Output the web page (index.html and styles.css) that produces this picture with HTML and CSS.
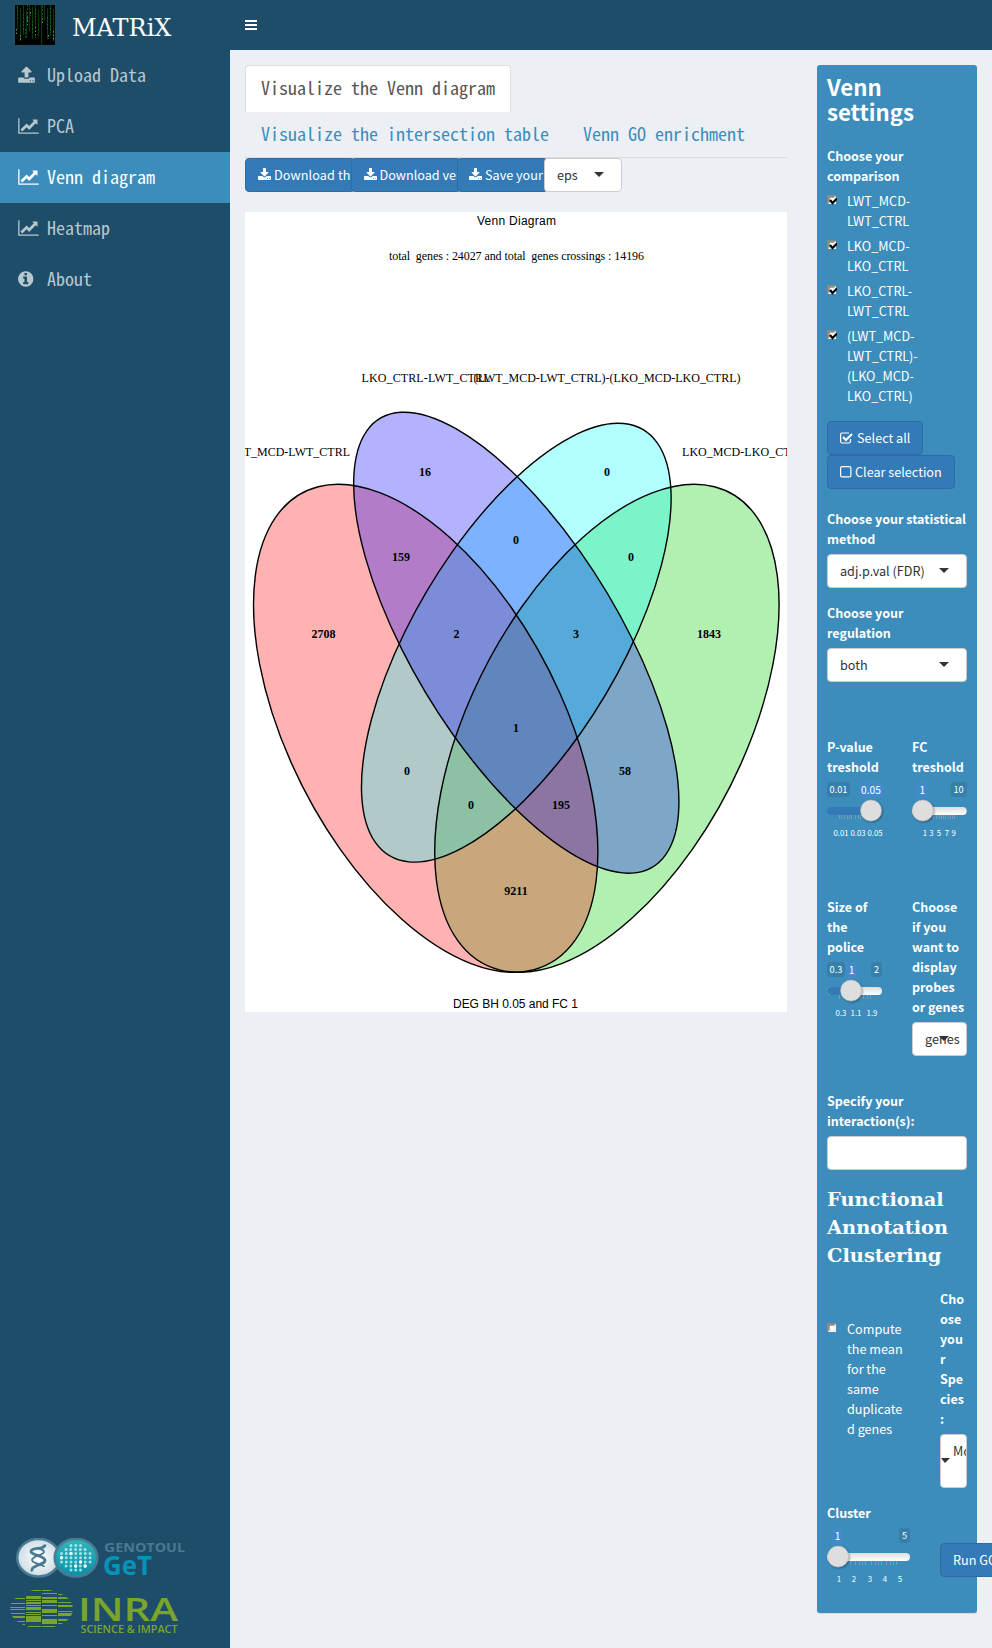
FILE: index.html
```
<!DOCTYPE html>
<html lang="en">
<head>
<meta charset="utf-8">
<title>MATRiX</title>
<link rel="stylesheet" href="styles.css">
</head>
<body>
<svg width="0" height="0" class="defs">
  <defs>
    <symbol id="chart" viewBox="0 0 2048 1792"><path d="M2048 1536v128h-2048v-1536h128v1408h1920zM1920 288v435q0 21-19.500 29.500t-35.500-7.500l-121-121-633 633q-10 10-23 10t-23-10l-233-233-416 416-192-192 585-585q10-10 23-10t23 10l233 233 464-464-121-121q-16-16-7.500-35.500t29.500-19.500h435q14 0 23 9t9 23z"/></symbol>
    <symbol id="upload" viewBox="64 0 1664 1792"><path d="M1344 1472q0-26-19-45t-45-19-45 19-19 45 19 45 45 19 45-19 19-45zm256 0q0-26-19-45t-45-19-45 19-19 45 19 45 45 19 45-19 19-45zm128-224v320q0 40-28 68t-68 28h-1472q-40 0-68-28t-28-68v-320q0-40 28-68t68-28h427q21 56 70.500 92t110.500 36h256q61 0 110.500-36t70.500-92h427q40 0 68 28t28 68zm-325-648q-17 40-59 40h-256v448q0 26-19 45t-45 19h-256q-26 0-45-19t-19-45v-448h-256q-42 0-59-40-17-39 14-69l448-448q18-19 45-19t45 19l448 448q31 30 14 69z"/></symbol>
    <symbol id="download" viewBox="64 0 1664 1792"><path d="M1344 1344q0-26-19-45t-45-19-45 19-19 45 19 45 45 19 45-19 19-45zm256 0q0-26-19-45t-45-19-45 19-19 45 19 45 45 19 45-19 19-45zm128-224v320q0 40-28 68t-68 28h-1472q-40 0-68-28t-28-68v-320q0-40 28-68t68-28h465l135 136q58 56 136 56t136-56l136-136h464q40 0 68 28t28 68zm-325-569q17 41-14 70l-448 448q-18 19-45 19t-45-19l-448-448q-31-29-14-70 17-39 59-39h256v-448q0-26 19-45t45-19h256q26 0 45 19t19 45v448h256q42 0 59 39z"/></symbol>
    <symbol id="info" viewBox="128 0 1536 1792"><path d="M1152 1376v-160q0-14-9-23t-23-9h-96v-512q0-14-9-23t-23-9h-320q-14 0-23 9t-9 23v160q0 14 9 23t23 9h96v320h-96q-14 0-23 9t-9 23v160q0 14 9 23t23 9h448q14 0 23-9t9-23zm-128-896v-160q0-14-9-23t-23-9h-192q-14 0-23 9t-9 23v160q0 14 9 23t23 9h192q14 0 23-9t9-23zm640 416q0 209-103 385.500t-279.500 279.500-385.500 103-385.500-103-279.500-279.500-103-385.500 103-385.500 279.500-279.500 385.500-103 385.500 103 279.500 279.500 103 385.500z"/></symbol>
    <linearGradient id="rail" x1="0" y1="0" x2="0" y2="1"><stop offset="0" stop-color="#ddd"/><stop offset="1" stop-color="#fff"/></linearGradient>
    <filter id="soft" x="-30%" y="-30%" width="160%" height="170%"><feDropShadow dx="1" dy="1" stdDeviation="1" flood-opacity=".4"/></filter>
  </defs>
</svg>

<header class="topbar">
  <div class="brand">
    <svg class="rain" width="40" height="40" viewBox="0 0 40 40">
      <rect width="40" height="40" fill="#010301"/>
      <g fill="none" stroke="#0a3a10" stroke-width="1.200">
        <path d="M2.500 0V24M5.500 3V36M8.500 0V30M11.500 6V33M14.500 0V26M17.500 2V34M20.500 0V22M23.500 5V31M26.500 0V40M29.500 0V16M32.500 3V34M35.500 0V31M38.500 4V36"/>
      </g>
      <g fill="none" stroke="#1f6a29" stroke-width="1" stroke-dasharray="1.500 2">
        <path d="M2.500 2V14M8.500 9V27M12.500 0V17M17.500 16V30M20.500 4V15M27.500 1V12M32.500 12V24M35.500 3V28M10.500 24V34"/>
      </g>
      <g fill="none" stroke="#66906b" stroke-width="1" stroke-dasharray="1.500 2">
        <path d="M5.500 30V36M12.500 12V20M20.500 22V33M27.500 13V19M33.500 30V34M38.500 26V36M1.500 24V30M15.500 7V11"/>
      </g>
    </svg>
    <span class="brand-name">MATRiX</span>
  </div>
  <svg class="bars" width="12" height="10"><path d="M0 0h12v2H0zM0 4h12v2H0zM0 8h12v2H0z" fill="#fff"/></svg>
</header>

<div class="shell">
  <aside class="sidebar">
    <nav>
      <a class="item"><span class="ico"><svg width="17" height="18"><use href="#upload"/></svg></span>Upload Data</a>
      <a class="item"><span class="ico"><svg width="21" height="18"><use href="#chart"/></svg></span>PCA</a>
      <a class="item active"><span class="ico"><svg width="21" height="18"><use href="#chart"/></svg></span>Venn diagram</a>
      <a class="item"><span class="ico"><svg width="21" height="18"><use href="#chart"/></svg></span>Heatmap</a>
      <a class="item"><span class="ico"><svg width="15.500" height="18"><use href="#info"/></svg></span>About</a>
    </nav>
    <svg class="logos" width="200" height="110" viewBox="0 -2 200 110">
      <defs>
        <radialGradient id="pearl"><stop offset="0" stop-color="#fff"/><stop offset="1" stop-color="#cfdde6"/></radialGradient>
        <linearGradient id="teal" x1="0" y1="0" x2="0" y2="1"><stop offset="0" stop-color="#35b5bf"/><stop offset="1" stop-color="#0592a6"/></linearGradient>
        <clipPath id="globe"><ellipse cx="41.500" cy="69" rx="31.500" ry="19.500"/></clipPath>
      </defs>
      <ellipse cx="38.500" cy="17.700" rx="21.300" ry="18.800" fill="url(#pearl)" stroke="#4b7b92" stroke-width="2.500"/>
      <g fill="none" stroke="#4b7990">
        <path d="M45 4.500c0 6-14 2-14 7 0 4 14 4 14 9 0 3-4 3-8 5s-6 3-5 6" stroke-width="2.800"/>
        <path d="M37 8c4 2 7 1 7 4s-12 4-12 8 12 4 12 7" stroke-width="1.800"/>
      </g>
      <ellipse cx="76" cy="17.700" rx="21.300" ry="18.800" fill="url(#teal)" stroke="#4b7b92" stroke-width="2.500"/>
      <g fill="none" stroke="#c5f0f2" stroke-opacity=".8" stroke-width="3" stroke-linecap="round" stroke-dasharray="0.010 4.750">
        <path d="M71 5.500H81M66 9.500H86M61.500 13.500H91M61.500 17.700H91M61.500 22H91M66 26H86M71 30H81"/>
      </g>
      <path d="M71 13.500h0M61.500 17.700h0M80.500 22h0M75.700 26h0M85.200 26h0" stroke="#fff" stroke-width="3.400" stroke-linecap="round"/>
      <text x="104" y="11.500" class="geno" textLength="81" lengthAdjust="spacingAndGlyphs">G<tspan class="caps">ENOTOUL</tspan></text>
      <text x="103" y="35" class="get" textLength="49" lengthAdjust="spacingAndGlyphs">GeT</text>
      <g clip-path="url(#globe)" fill="#7aa52c">
        <path d="M10 58h15v1H10zM10 63h15v1H10zM10 67h15v1H10zM10 69h15v1H10zM10 73h15v1H10zM10 76h15v2H10zM10 81h15v1H10zM10 84h15v1H10z"/>
        <path d="M26 50h15v1H26zM26 56h15v3H26zM26 60h15v1H26zM26 62h15v2H26zM26 65h15v1H26zM26 67h15v3H26zM26 72h15v1H26zM26 74h15v1H26zM26 76h15v6H26zM26 86h15v1H26z"/>
        <path d="M42 50h15v1H42zM42 53h15v1H42zM42 57h15v2H42zM42 60h15v3H42zM42 65h15v1H42zM42 69h15v4H42zM42 75h15v1H42zM42 79h15v5H42zM42 86h15v1H42z"/>
        <path d="M58 54h15v1H58zM58 57h15v2H58zM58 62h15v1H58zM58 65h15v2H58zM58 71h15v1H58zM58 73h15v3H58zM58 79h15v2H58zM58 83h15v1H58z"/>
      </g>
      <text x="78" y="81" class="inra" textLength="100" lengthAdjust="spacingAndGlyphs">INRA</text>
      <text x="80.500" y="93" class="impact" textLength="97" lengthAdjust="spacingAndGlyphs">SCIENCE &amp; IMPACT</text>
    </svg>
  </aside>

  <main class="content">
    <ul class="tabs">
      <li class="tab current">Visualize the Venn diagram</li>
      <li class="tab">Visualize the intersection table</li>
      <li class="tab">Venn GO enrichment</li>
    </ul>
    <div class="toolbar">
      <button class="btn b1"><svg width="13" height="14"><use href="#download"/></svg>Download the plot</button>
      <button class="btn b2"><svg width="13" height="14"><use href="#download"/></svg>Download venn data</button>
      <button class="btn b3"><svg width="13" height="14"><use href="#download"/></svg>Save your plot</button>
      <div class="select format">eps<i class="caret"></i></div>
    </div>
    <svg class="plot" width="542" height="800" viewBox="0 0 542 800">
      <rect width="542" height="800" fill="#fff"/>
      <g transform="translate(271.300 430.700) scale(604 856)">
        <g fill-opacity=".3">
          <ellipse rx=".35" ry=".2" transform="translate(.15 .1) rotate(-45)" fill="#00cd00"/>
          <ellipse rx=".35" ry=".2" transform="translate(-.15 .1) rotate(45)" fill="#f00"/>
          <ellipse rx=".33" ry=".15" transform="rotate(-45)" fill="#0ff"/>
          <ellipse rx=".35" ry=".15" transform="rotate(45)" fill="#00f"/>
        </g>
        <g fill="none" class="outline">
          <ellipse rx=".35" ry=".2" transform="translate(.15 .1) rotate(-45)"/>
          <ellipse rx=".35" ry=".2" transform="translate(-.15 .1) rotate(45)"/>
          <ellipse rx=".33" ry=".15" transform="rotate(-45)"/>
          <ellipse rx=".35" ry=".15" transform="rotate(45)"/>
        </g>
      </g>
      <g class="caption">
        <text x="271.500" y="13" textLength="79">Venn Diagram</text>
        <text x="270.500" y="796" textLength="125" xml:space="preserve">DEG BH 0.05 and FC 1</text>
      </g>
      <g class="names">
        <text x="271.500" y="48" textLength="255" xml:space="preserve">total  genes : 24027 and total  genes crossings : 14196</text>
        <text x="181" y="170" textLength="129">LKO_CTRL-LWT_CTRL</text>
        <text x="362" y="170" textLength="267">(LWT_MCD-LWT_CTRL)-(LKO_MCD-LKO_CTRL)</text>
        <text x="43" y="244" textLength="124">LWT_MCD-LWT_CTRL</text>
        <text x="499" y="244" textLength="124">LKO_MCD-LKO_CTRL</text>
      </g>
      <g class="counts">
        <text x="180" y="264">16</text><text x="362" y="264">0</text>
        <text x="271" y="332">0</text><text x="156" y="349">159</text><text x="386" y="349">0</text>
        <text x="78.500" y="426">2708</text><text x="211.500" y="426">2</text><text x="331" y="426">3</text><text x="464" y="426">1843</text>
        <text x="271" y="520">1</text><text x="162" y="563">0</text><text x="380" y="563">58</text>
        <text x="226" y="597">0</text><text x="316" y="597">195</text><text x="271" y="683">9211</text>
      </g>
    </svg>
  </main>

  <section class="panel">
    <h2>Venn settings</h2>
    <label class="label">Choose your comparison</label>
    <div class="checks">
      <div class="check"><svg class="box" width="10" height="10"><use href="#ticked"/></svg><span>LWT_MCD-LWT_CTRL</span></div>
      <div class="check"><svg class="box" width="10" height="10"><use href="#ticked"/></svg><span>LKO_MCD-LKO_CTRL</span></div>
      <div class="check"><svg class="box" width="10" height="10"><use href="#ticked"/></svg><span>LKO_CTRL-LWT_CTRL</span></div>
      <div class="check"><svg class="box" width="10" height="10"><use href="#ticked"/></svg><span>(LWT_MCD-LWT_CTRL)-(LKO_MCD-LKO_CTRL)</span></div>
    </div>
    <div class="actions">
      <button class="btn"><svg class="sq" width="14" height="12" viewBox="0 0 14 12"><path d="M10.500 7v2.500a1.500 1.500 0 0 1-1.500 1.500H2A1.500 1.500 0 0 1 .6 9.500V2.500A1.500 1.500 0 0 1 2 1h7" fill="none" stroke="#fff" stroke-width="1.200"/><path d="M3 5l3 3 6-6" fill="none" stroke="#fff" stroke-width="2.200"/></svg>Select all</button>
      <button class="btn"><svg class="sq" width="12" height="12" viewBox="0 0 12 12"><rect x=".6" y=".6" width="10.300" height="10.300" rx="1.500" fill="none" stroke="#fff" stroke-width="1.200"/></svg>Clear selection</button>
    </div>
    <label class="label">Choose your statistical method</label>
    <div class="select">adj.p.val (FDR)<i class="caret"></i></div>
    <label class="label second">Choose your regulation</label>
    <div class="select">both<i class="caret"></i></div>

    <div class="pair thresholds">
      <div>
        <label class="label">P-value treshold</label>
        <svg class="slider" width="60" height="60">
          <rect class="end" y="4" width="23" height="15" rx="3"/><text x="11.500" y="15">0.01</text>
          <rect class="val" x="32" y="4" width="24" height="16" rx="3"/><text class="now" x="44" y="16">0.05</text>
          <rect x="0" y="29" width="55" height="8" rx="4" fill="#337ab7"/>
          <path class="ticks" d="M12.500 37v4M14.500 37v4M17.500 37v4M20.500 37v4M22.500 37v4M24.500 37v4M28.500 37v4M31.500 37v4M33.500 37v4"/>
          <circle class="knob" cx="44" cy="32.500" r="10.500"/>
          <g class="grid"><text x="14" y="58">0.01</text><text x="31" y="58">0.03</text><text x="48" y="58">0.05</text></g>
        </svg>
      </div>
      <div>
        <label class="label">FC treshold</label>
        <svg class="slider" width="60" height="60">
          <rect class="val" x="4.700" y="4" width="11" height="16" rx="3"/><text class="now" x="10.300" y="16">1</text>
          <rect class="end" x="38.700" y="4" width="16" height="15" rx="3"/><text x="46.500" y="15">10</text>
          <rect x="0" y="29" width="54.700" height="8" rx="4" fill="url(#rail)"/>
          <path class="ticks" d="M21.500 37v4M24.500 37v4M27.500 37v4M29.500 37v4M31.500 37v4M33.500 37v4M36.500 37v4M38.500 37v4M40.500 37v4M42.500 37v4"/>
          <circle class="knob" cx="10.700" cy="32.500" r="10.500"/>
          <g class="grid"><text x="13" y="58">1</text><text x="19.500" y="58">3</text><text x="27" y="58">5</text><text x="35" y="58">7</text><text x="41.700" y="58">9</text></g>
        </svg>
      </div>
    </div>

    <div class="pair sizes">
      <div>
        <label class="label">Size of the police</label>
        <svg class="slider" width="60" height="60">
          <rect class="end" y="4" width="17.700" height="15" rx="3"/><text x="9" y="15">0.3</text>
          <rect class="val" x="18.500" y="4" width="11.500" height="16" rx="3"/><text class="now" x="24.500" y="16">1</text>
          <rect class="end" x="44" y="4" width="11" height="15" rx="3"/><text x="49.500" y="15">2</text>
          <rect x="0" y="29" width="55" height="8" rx="4" fill="url(#rail)"/><path d="M4 29h20v8H4a4 4 0 0 1 0-8z" fill="#337ab7"/>
          <path class="ticks" d="M12.500 37v4M33.500 37v4M36.500 37v4M40.500 37v4M43.500 37v4"/>
          <circle class="knob" cx="24" cy="32.500" r="10.500"/>
          <g class="grid"><text x="14" y="58">0.3</text><text x="29" y="58">1.1</text><text x="45" y="58">1.9</text></g>
        </svg>
      </div>
      <div>
        <label class="label">Choose if you want to display probes or genes</label>
        <div class="select">genes<i class="caret"></i></div>
      </div>
    </div>

    <label class="label">Specify your interaction(s):</label>
    <div class="select"></div>
    <h3>Functional Annotation Clustering</h3>

    <div class="cluster-grid">
      <div class="check mean"><svg class="box" width="10" height="10"><use href="#empty"/></svg><span>Compute the mean for the same duplicated genes</span></div>
      <div class="species">
        <label class="label">Choose your Species:</label>
        <div class="select tall"><span>Mouse</span><i class="caret"></i></div>
      </div>
      <div class="cluster">
        <label class="label">Cluster</label>
        <svg class="slider" width="86" height="60">
          <rect class="val" x="4.700" y="4" width="11" height="16" rx="3"/><text class="now" x="10.500" y="16">1</text>
          <rect class="end" x="72" y="4" width="11" height="15" rx="3"/><text x="77.500" y="15">5</text>
          <rect x="0" y="29" width="83" height="8" rx="4" fill="url(#rail)"/>
          <path class="ticks" d="M23.500 37v4M28.500 37v4M32.500 37v4M35.500 37v4M38.500 37v4M44.500 37v4M48.500 37v4M51.500 37v4M54.500 37v4M59.500 37v4M63.500 37v4M66.500 37v4M69.500 37v4"/>
          <circle class="knob" cx="11" cy="32.500" r="10.500"/>
          <g class="grid"><text x="12" y="58">1</text><text x="27" y="58">2</text><text x="43" y="58">3</text><text x="58" y="58">4</text><text x="73" y="58">5</text></g>
        </svg>
      </div>
      <button class="btn run">Run GO</button>
    </div>
  </section>
</div>
<svg width="0" height="0" class="defs">
  <symbol id="empty" viewBox="0 0 10 10"><rect width="9" height="9" fill="#fff"/><path d="M0 0h9v1.500H1.500V9H0z" fill="#8c8781"/><path d="M1.500 1.500h6v1H2.500v5h-1z" fill="#5a544e"/><path d="M7.500 1.500h.7V8.200H1.500V7.500h6z" fill="#d8d4cf"/></symbol>
  <symbol id="ticked" viewBox="0 0 10 10"><rect width="9" height="9" fill="#fff"/><path d="M0 0h9v1.500H1.500V9H0z" fill="#8c8781"/><path d="M1.500 1.500h6v1H2.500v5h-1z" fill="#5a544e"/><path d="M3 5l2.500 3L10 3.500" fill="none" stroke="#000" stroke-width="2.200"/></symbol>
</svg>
</body>
</html>
```
FILE: styles.css
```
* { box-sizing: border-box; }
html, body { margin: 0; height: 1648px; overflow: hidden; }
body { background: #ecf0f5; color: #333; font: 12.650px/20px "Noto Sans CJK SC", "Open Sans", sans-serif; }
.defs { position: absolute; }
svg { display: block; flex: none; }

.topbar { display: flex; align-items: center; height: 50px; background: #1e4d69; }
.brand { display: flex; align-items: center; width: 230px; padding-left: 15px; gap: 17px; }
.brand-name { font: 24px/44px "DejaVu Serif", serif; color: #fff; padding-top: 6px; }
.bars { margin-left: 15px; }

.shell { display: flex; align-items: flex-start; height: 1598px; }
.sidebar { width: 230px; height: 1598px; flex: none; background: #1e4d69; display: flex; flex-direction: column; justify-content: space-between; }
.item { display: flex; align-items: center; height: 51px; padding: 0 0 4px 18px; color: #b8c7ce; fill: currentColor; font: 18px/24px "Noto Sans Mono CJK SC", "Liberation Mono", monospace; white-space: pre; }
.item.active { background: #3c8dbc; color: #fff; }
.ico { width: 29px; margin-top: 2px; }
.geno { font: 700 13px "Open Sans", sans-serif; fill: #4a7a93; }
.caps { font-size: 12px; }
.get { font: 700 26px "Open Sans", sans-serif; fill: #0693b7; }
.inra { font: 600 33px "Open Sans", sans-serif; fill: #7aa52c; }
.impact { font: 600 10px "Open Sans", sans-serif; fill: #7aa52c; }

.content { width: 542px; flex: none; margin: 15px 30px 0 15px; }
.tabs { display: flex; flex-wrap: wrap; list-style: none; margin: 0; padding: 0; height: 93px; border-bottom: 1px solid #ddd; }
.tab { height: 46px; padding: 10px 16px; margin-right: 2px; font: 18px/24px "Noto Sans Mono CJK SC", "Liberation Mono", monospace; color: #3c8dbc; white-space: nowrap; }
.tab.current { height: 47px; margin-bottom: -1px; padding: 9px 15px; margin-right: 250px; color: #555; background: #fff; border: 1px solid #ddd; border-bottom: 0; border-radius: 4px 4px 0 0; }
.toolbar { display: flex; height: 34px; }
.btn { display: flex; align-items: center; gap: 3px; height: 34px; padding: 0 12px; border: 1px solid #2e6da4; border-radius: 4px; background: #337ab7; color: #fff; fill: #fff; font: inherit; white-space: nowrap; overflow: hidden; }
.b1 { width: 110px; margin-right: -4.500px; padding-right: 0; letter-spacing: .1px; }
.b2 { width: 110px; margin-right: -3.500px; padding: 0 0 0 12px; }
.b3 { width: 91px; margin-right: -4px; padding: 0 0 0 11px; }
.select { position: relative; display: flex; align-items: center; height: 34px; padding: 0 12px; border: 1px solid #ccc; border-radius: 4px; background: #fff; color: #333; white-space: nowrap; }
.format { width: 78px; }
.caret { position: absolute; right: 17px; top: 13px; border: 5px solid transparent; border-top-color: #333; border-bottom: 0; }
.plot { margin-top: 20px; }
.outline { stroke: #000; stroke-width: 1.400px; }
.outline ellipse { vector-effect: non-scaling-stroke; }
.caption, .names, .counts { text-anchor: middle; fill: #000; }
.caption { font: 12px "Liberation Sans", sans-serif; }
.names { font: 12px "Liberation Serif", serif; }
.counts { font: 700 12px "Liberation Serif", serif; }

.panel { width: 160px; height: 1548px; flex: none; margin-top: 15px; padding: 9px 10px; border-radius: 3px; background: #3c8dbc; color: #fff; box-shadow: 0 1px 1px rgba(0,0,0,.1); }
h2 { margin: 0 0 23px; font-size: 22.200px; line-height: 25px; font-weight: 700; }
h3 { margin: 16px 0 20px; font: 700 19.400px/28px "DejaVu Serif", serif; }
.label { display: block; font-size: 12.500px; font-weight: 700; margin: -1px 0 5px; }
.checks { display: flex; flex-direction: column; gap: 5px; margin-top: 6px; }
.check { display: flex; gap: 10px; }
.check span { margin: -1px 0 1px; }
.box { margin-top: 3px; }
.actions { margin: 14px 0 21px; display: flex; flex-direction: column; align-items: flex-start; }
.second { margin-top: 15px; }
.pair { display: grid; grid-template-columns: 55px 55px; gap: 30px; }
.pair > div, .species, .cluster { display: flow-root; }
.pair .label:has(+ .slider), .cluster .label { margin-bottom: 1px; }
.thresholds { margin-top: 56px; height: 160px; }
.sizes { height: 194px; }
.slider { overflow: visible; }
.slider text { font-size: 9.200px; fill: #fff; text-anchor: middle; }
.slider .now { font-size: 10.200px; }
.slider .grid text { font-size: 7.800px; }
.end { fill: #367fa9; }
.val { fill: #428bca; }
.knob { fill: #dedede; stroke: #bbb; stroke-width: .5px; filter: url(#soft); }
.ticks { stroke: #7b9db2; stroke-width: 1px; }
.cluster-grid { display: grid; grid-template-columns: 83px 27px; column-gap: 30px; grid-template-rows: 214px auto; }
.mean { padding-top: 30px; align-items: flex-start; }
.mean span { overflow-wrap: anywhere; width: 58px; }
.species .label { overflow-wrap: anywhere; width: 27px; }
.tall { height: 54px; overflow: hidden; align-items: flex-start; padding-top: 6px; }
.tall .caret { left: 0; right: auto; top: 23px; border-left-width: 4px; }
.run { margin-top: 39px; width: 74px; }
```
